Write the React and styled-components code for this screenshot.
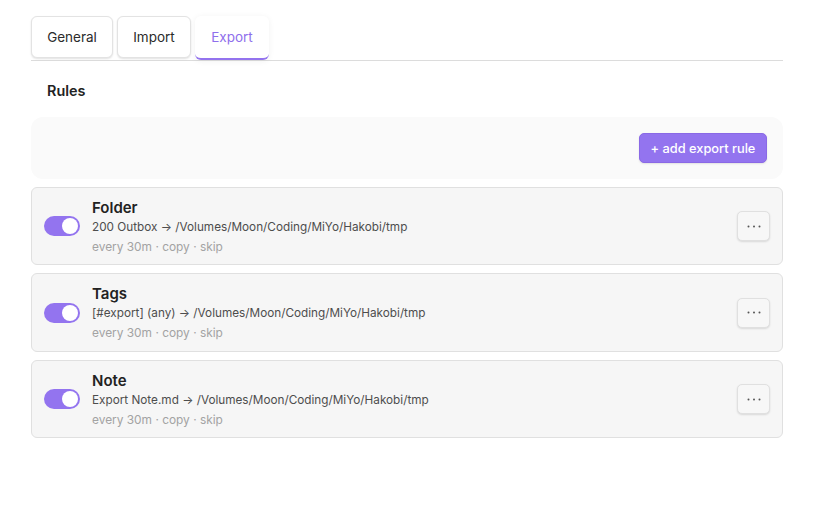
import React from "react";
import styled, { createGlobalStyle } from "styled-components";

const Global = createGlobalStyle`
  html, body { margin: 0; padding: 0; background: #fff; }
  body { font-family: Inter, "Liberation Sans", sans-serif; color: #222; -webkit-font-smoothing: antialiased; }
`;

const Page = styled.div`
  box-sizing: border-box;
  width: 814px;
  height: 505px;
  padding: 16px 31px 0;
  display: flex;
  flex-direction: column;
`;

const TabBar = styled.div`
  display: flex;
  gap: 4px;
  height: 44px;
  border-bottom: 1px solid #dcdcdc;
  box-sizing: content-box;
`;

const Tab = styled.button`
  box-sizing: border-box;
  height: ${(p) => (p.$active ? "44px" : "42px")};
  width: ${(p) => p.$w}px;
  padding: 0;
  font: 400 13.5px Inter, sans-serif;
  color: ${(p) => (p.$active ? "#8f6fec" : "#2b2b2b")};
  background: #fff;
  border: ${(p) => (p.$active ? "none" : "1px solid #e3e3e3")};
  border-bottom: ${(p) => (p.$active ? "2px solid #9373ee" : "1px solid #e3e3e3")};
  border-radius: 6px;
  box-shadow: ${(p) => (p.$active ? "0 1px 6px rgba(0,0,0,.06)" : "0 1px 2px rgba(0,0,0,.12)")};
`;

const Heading = styled.h2`
  margin: 21px 0 18px 16px;
  font-size: 14.4px;
  line-height: 17px;
  font-weight: 600;
  color: #222;
`;

const Toolbar = styled.div`
  box-sizing: border-box;
  height: 62px;
  background: #fafafa;
  border-radius: 12px;
  padding: 16px;
  display: flex;
  justify-content: flex-end;
  margin-bottom: 8px;
`;

const AddButton = styled.button`
  box-sizing: border-box;
  width: 128px;
  height: 30px;
  padding: 0;
  border: 1px solid #8a69e6;
  border-radius: 5px;
  background: #9374ef;
  color: #fff;
  font: 500 12.8px Inter, sans-serif;
  box-shadow: 0 1px 2px rgba(0,0,0,.1);
`;

const Rules = styled.div`
  display: flex;
  flex-direction: column;
  gap: 8px;
`;

const Card = styled.div`
  box-sizing: border-box;
  height: 78.49px;
  background: #f6f6f6;
  border: 1px solid #e0e0e0;
  border-radius: 6px;
  padding: 0 12px;
  display: flex;
  align-items: center;
`;

const Toggle = styled.span`
  box-sizing: border-box;
  width: 36px;
  height: 20px;
  border-radius: 10px;
  background: #9374ef;
  padding: 2px;
  display: flex;
  justify-content: flex-end;
  flex-shrink: 0;
  &::after {
    content: "";
    width: 16px;
    height: 16px;
    border-radius: 50%;
    background: #fff;
  }
`;

const Body = styled.div`
  flex: 1;
  margin-left: 12px;
  display: flex;
  flex-direction: column;
`;

const Title = styled.div`
  font-size: 15px;
  line-height: 17px;
  font-weight: 600;
  color: #222;
`;

const Path = styled.div`
  font-size: 11.75px;
  line-height: 15px;
  margin-top: 4px;
  color: #4d4d4d;
`;

const Meta = styled.div`
  font-size: 11.9px;
  line-height: 15px;
  margin-top: 4px;
  color: #a3a3a3;
`;

const MoreButton = styled.button`
  box-sizing: border-box;
  width: 33px;
  height: 30px;
  padding: 0;
  display: flex;
  align-items: center;
  justify-content: center;
  background: #f7f7f7;
  border: 1px solid #e0e0e0;
  border-radius: 5px;
  box-shadow: 0 1px 2px rgba(0,0,0,.12);
  color: #555;
`;

const Dots = () => (
  <svg width="14" height="3" viewBox="0 0 14 3" fill="currentColor">
    <circle cx="1.5" cy="1.5" r="1" />
    <circle cx="7" cy="1.5" r="1" />
    <circle cx="12.5" cy="1.5" r="1" />
  </svg>
);

const rules = [
  { t: "Folder", p: "200 Outbox → /Volumes/Moon/Coding/MiYo/Hakobi/tmp" },
  { t: "Tags", p: "[#export] (any) → /Volumes/Moon/Coding/MiYo/Hakobi/tmp" },
  { t: "Note", p: "Export Note.md → /Volumes/Moon/Coding/MiYo/Hakobi/tmp" },
];

export default function App() {
  return (
    <Page>
      <Global />
      <TabBar>
        <Tab $w={82}>General</Tab>
        <Tab $w={74}>Import</Tab>
        <Tab $w={74} $active>Export</Tab>
      </TabBar>
      <Heading>Rules</Heading>
      <Toolbar>
        <AddButton>+ add export rule</AddButton>
      </Toolbar>
      <Rules>
        {rules.map((r) => (
          <Card key={r.t}>
            <Toggle />
            <Body>
              <Title>{r.t}</Title>
              <Path>{r.p}</Path>
              <Meta>every 30m · copy · skip</Meta>
            </Body>
            <MoreButton aria-label="More"><Dots /></MoreButton>
          </Card>
        ))}
      </Rules>
    </Page>
  );
}
